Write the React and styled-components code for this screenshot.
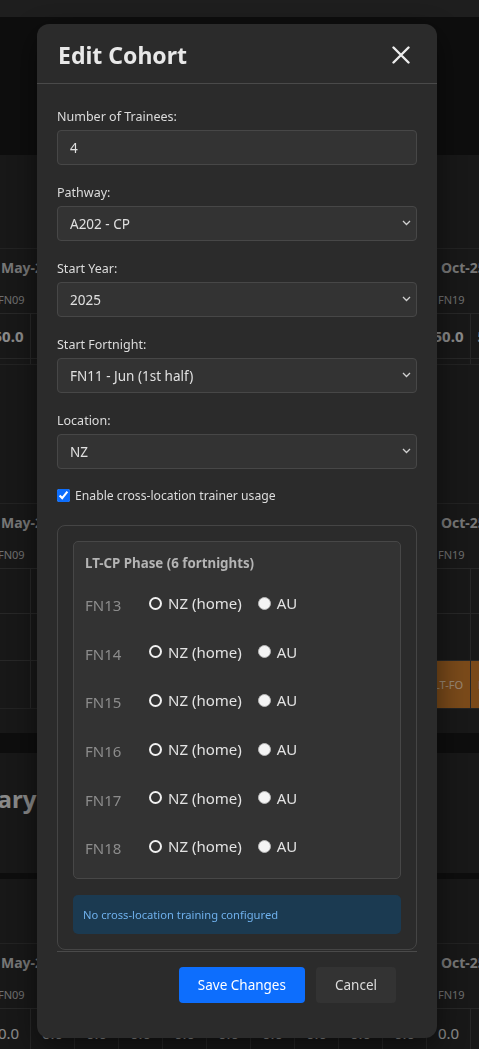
import React, { useState } from 'react';
import styled, { createGlobalStyle } from 'styled-components';

const GlobalStyle = createGlobalStyle`
  html, body {
    margin: 0;
    padding: 0;
    background: #171717;
    font-family: "Noto Sans", "Open Sans", sans-serif;
    overflow: hidden;
  }
  * { box-sizing: border-box; }
`;

// background page (sits under the modal overlay)
const Page = styled.div`
  width: 479px;
  height: 1049px;
  overflow: hidden;
  background: #282828;
`;

const TopBar = styled.div`
  height: 17px;
  background: #323232;
`;

const Band = styled.div`
  height: ${(p) => p.h}px;
  background: #171717;
`;

const Section = styled.div`
  background: #282828;
  padding-top: ${(p) => p.pt || 0}px;
  padding-bottom: ${(p) => p.pb || 0}px;
`;

const Grid = styled.div`
  display: grid;
  grid-template-columns: repeat(12, 44px);
  margin-left: -13px;
  border-top: 1px solid #3a3a3a;
  border-bottom: 1px solid #3a3a3a;
`;

const MonthCell = styled.div`
  grid-column: span 2;
  height: 37px;
  display: flex;
  align-items: center;
  padding-left: 14px;
  color: #c6c6c6;
  font-weight: 700;
  font-size: 14px;
  white-space: nowrap;
`;

const FnCell = styled.div`
  height: 27px;
  display: flex;
  align-items: center;
  padding-left: 11px;
  color: #b8b8b8;
  font-size: 11px;
`;

const DataCell = styled.div`
  height: ${(p) => p.h}px;
  display: flex;
  align-items: center;
  justify-content: center;
  border-top: 1px solid #424242;
  border-right: 1px solid #424242;
  background: ${(p) => (p.fill ? '#cb7b2b' : 'transparent')};
  color: ${(p) => (p.fill ? '#ffe0c0' : '#e6e6e6')};
  font-size: ${(p) => (p.fill ? 11 : 15)}px;
  font-weight: ${(p) => (p.bold ? 700 : 400)};
`;

const Heading = styled.h2`
  margin: 0 0 0 -78px;
  height: 90px;
  display: flex;
  align-items: center;
  color: #e4e4e4;
  font-size: 24px;
  font-weight: 700;
`;

// modal
const Overlay = styled.div`
  position: fixed;
  inset: 0;
  background: rgba(0, 0, 0, 0.4);
  display: flex;
  justify-content: center;
  align-items: flex-start;
  padding: 24px 5px 0 0;
`;

const Modal = styled.div`
  width: 400px;
  background: #2b2b2b;
  border-radius: 12px;
  box-shadow: 0 10px 30px rgba(0, 0, 0, 0.5);
  color: #dcdcdc;
`;

const Header = styled.div`
  height: 60px;
  padding: 3px 27px 0 21px;
  display: flex;
  align-items: center;
  justify-content: space-between;
  border-bottom: 1px solid #4a4a4a;
`;

const Title = styled.h2`
  margin: 0;
  font-size: 23px;
  font-weight: 700;
  color: #e8e8e8;
`;

const CloseButton = styled.button`
  background: none;
  border: none;
  padding: 0;
  width: 18px;
  height: 18px;
  display: flex;
  cursor: pointer;
`;

const Body = styled.div`
  padding: 24px 20px 0;
`;

const Group = styled.div`
  margin-bottom: 19px;
`;

const Label = styled.label`
  display: block;
  font-size: 12.5px;
  line-height: 17px;
  margin-bottom: 5px;
  color: #dcdcdc;
`;

const TextInput = styled.input`
  width: 100%;
  height: 35px;
  padding: 0 12px;
  background: #333333;
  border: 1px solid #474747;
  border-radius: 4px;
  color: #e0e0e0;
  font-family: inherit;
  font-size: 13.5px;
  outline: none;
`;

const SelectWrap = styled.div`
  position: relative;
`;

const Select = styled.select`
  appearance: none;
  width: 100%;
  height: 35px;
  padding: 0 12px;
  background: #333333;
  border: 1px solid #474747;
  border-radius: 4px;
  color: #e0e0e0;
  font-family: inherit;
  font-size: 13.5px;
  outline: none;
`;

const Chevron = styled.svg`
  position: absolute;
  right: 6px;
  top: 14px;
  pointer-events: none;
`;

const CheckRow = styled.label`
  display: flex;
  align-items: center;
  gap: 5px;
  font-size: 12.2px;
  height: 16px;
  margin: -1px 0 22px;
  color: #dcdcdc;
`;

const Checkbox = styled.input`
  margin: 0;
  width: 13px;
  height: 13px;
  accent-color: #0d6efd;
`;

const OuterBox = styled.div`
  border: 1px solid #454545;
  border-radius: 8px;
  padding: 15px;
`;

const PhaseBox = styled.div`
  background: #333333;
  border: 1px solid #474747;
  border-radius: 5px;
  padding: 13px 11px 7px;
`;

const PhaseTitle = styled.div`
  font-size: 13.3px;
  font-weight: 700;
  line-height: 17px;
  color: #b4b4b4;
  margin-bottom: 7px;
`;

const FnRow = styled.div`
  height: 48.6px;
  display: flex;
  align-items: center;
`;

const FnLabel = styled.span`
  width: 64px;
  padding-top: 4px;
  font-size: 15px;
  color: #8c8c8c;
`;

const RadioLabel = styled.label`
  display: flex;
  align-items: center;
  gap: 6px;
  margin-right: 16px;
  font-size: 15px;
  color: #e2e2e2;
`;

const Radio = styled.input`
  appearance: none;
  margin: 0;
  width: 13px;
  height: 13px;
  border-radius: 50%;
  background: #f4f4f4;
  border: 1px solid #b8b8b8;
  &:checked {
    background: #333333;
    border: 2.5px solid #f0f0f0;
  }
`;

const Notice = styled.div`
  margin-top: 16px;
  height: 39px;
  display: flex;
  align-items: center;
  padding: 0 10px;
  background: #1b3a51;
  border-radius: 5px;
  color: #6fb0ec;
  font-size: 11.2px;
`;

const Footer = styled.div`
  margin: 1px 20px 0;
  border-top: 1px solid #4a4a4a;
  padding: 15px 21px 35px 0;
  display: flex;
  justify-content: flex-end;
  gap: 11px;
`;

const Button = styled.button`
  height: 36px;
  padding: 0 19px;
  border: none;
  border-radius: 4px;
  font-family: inherit;
  font-size: 13.5px;
  background: ${(p) => (p.primary ? '#0d6efd' : '#333333')};
  color: ${(p) => (p.primary ? '#ffffff' : '#dcdcdc')};
  cursor: pointer;
`;

const months = ['May-25', 'Jun-25', 'Jul-25', 'Aug-25', 'Sep-25', 'Oct-25'];
const fns = Array.from({ length: 12 }, (_, i) => `FN${String(9 + i).padStart(2, '0')}`);

function Table({ rows }) {
  return (
    <Grid>
      {months.map((m) => (
        <MonthCell key={m}>{m}</MonthCell>
      ))}
      {fns.map((f) => (
        <FnCell key={f}>{f}</FnCell>
      ))}
      {rows.map((row, r) =>
        fns.map((f, i) => {
          const fill = row.fill && i >= 10;
          return (
            <DataCell key={`${r}-${f}`} h={row.h} bold={row.bold} fill={fill}>
              {fill ? 'LT-FO' : row.value}
            </DataCell>
          );
        })
      )}
    </Grid>
  );
}

function SelectField({ label, value, options }) {
  return (
    <Group>
      <Label>{label}</Label>
      <SelectWrap>
        <Select defaultValue={value}>
          {options.map((o) => (
            <option key={o}>{o}</option>
          ))}
        </Select>
        <Chevron width="9" height="6" viewBox="0 0 9 6">
          <path d="M1 1l3.5 3.5L8 1" fill="none" stroke="#d0d0d0" strokeWidth="1.3" />
        </Chevron>
      </SelectWrap>
    </Group>
  );
}

export default function App() {
  const [choices, setChoices] = useState({});
  const phaseFns = ['FN13', 'FN14', 'FN15', 'FN16', 'FN17', 'FN18'];

  return (
    <>
      <GlobalStyle />
      <Page>
        <TopBar />
        <Band h={138} />
        <Section pt={93} pb={48}>
          <Table rows={[{ h: 45, value: '50.0', bold: true }, { h: 6, value: '' }]} />
        </Section>
        <Section pt={90} pb={24}>
          <Table
            rows={[
              { h: 45, value: '' },
              { h: 47, value: '' },
              { h: 48, value: '', fill: true },
            ]}
          />
        </Section>
        <Band h={20} />
        <Section pb={30}>
          <Heading>Summary</Heading>
        </Section>
        <Band h={6} />
        <Section pt={64}>
          <Table rows={[{ h: 48, value: '0.0' }]} />
        </Section>
      </Page>

      <Overlay>
        <Modal>
          <Header>
            <Title>Edit Cohort</Title>
            <CloseButton aria-label="Close">
              <svg width="18" height="18" viewBox="0 0 18 18">
                <path d="M1.5 1.5l15 15M16.5 1.5l-15 15" stroke="#ececec" strokeWidth="2.4" strokeLinecap="round" />
              </svg>
            </CloseButton>
          </Header>
          <Body>
            <Group>
              <Label>Number of Trainees:</Label>
              <TextInput type="number" defaultValue="4" />
            </Group>
            <SelectField label="Pathway:" value="A202 - CP" options={['A202 - CP', 'A320 - FO']} />
            <SelectField label="Start Year:" value="2025" options={['2024', '2025', '2026']} />
            <SelectField
              label="Start Fortnight:"
              value="FN11 - Jun (1st half)"
              options={['FN10 - May (2nd half)', 'FN11 - Jun (1st half)', 'FN12 - Jun (2nd half)']}
            />
            <SelectField label="Location:" value="NZ" options={['NZ', 'AU']} />
            <CheckRow>
              <Checkbox type="checkbox" defaultChecked />
              Enable cross-location trainer usage
            </CheckRow>
            <OuterBox>
              <PhaseBox>
                <PhaseTitle>LT-CP Phase (6 fortnights)</PhaseTitle>
                {phaseFns.map((fn) => {
                  const val = choices[fn] || 'NZ';
                  return (
                    <FnRow key={fn}>
                      <FnLabel>{fn}</FnLabel>
                      <RadioLabel>
                        <Radio
                          type="radio"
                          name={fn}
                          checked={val === 'NZ'}
                          onChange={() => setChoices({ ...choices, [fn]: 'NZ' })}
                        />
                        NZ (home)
                      </RadioLabel>
                      <RadioLabel>
                        <Radio
                          type="radio"
                          name={fn}
                          checked={val === 'AU'}
                          onChange={() => setChoices({ ...choices, [fn]: 'AU' })}
                        />
                        AU
                      </RadioLabel>
                    </FnRow>
                  );
                })}
              </PhaseBox>
              <Notice>No cross-location training configured</Notice>
            </OuterBox>
          </Body>
          <Footer>
            <Button primary>Save Changes</Button>
            <Button>Cancel</Button>
          </Footer>
        </Modal>
      </Overlay>
    </>
  );
}
